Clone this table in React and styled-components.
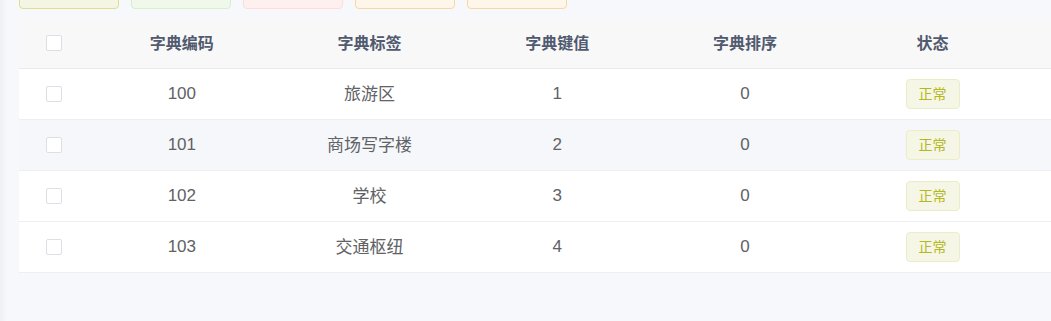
import React from 'react';
import styled, { createGlobalStyle } from 'styled-components';

const rows = [
  { code: 100, label: '旅游区', value: 1, sort: 0 },
  { code: 101, label: '商场写字楼', value: 2, sort: 0, hovered: true },
  { code: 102, label: '学校', value: 3, sort: 0 },
  { code: 103, label: '交通枢纽', value: 4, sort: 0 },
];

// toolbar buttons sit mostly above the visible area, only their bottom edge shows
const buttons = [
  { label: '新增', tone: 'primary' },
  { label: '修改', tone: 'success' },
  { label: '删除', tone: 'danger' },
  { label: '导出', tone: 'warning' },
  { label: '关闭', tone: 'warning' },
];

const tones = {
  primary: { bg: '#f4f5e3', border: '#dcdf8e' },
  success: { bg: '#eff8eb', border: '#d4efc9' },
  danger: { bg: '#fff0f0', border: '#fddcdc' },
  warning: { bg: '#fff6ea', border: '#f8d8a2' },
};

const App = () => (
  <>
    <GlobalStyle />
    <Page>
      <Toolbar>
        {buttons.map((b, i) => (
          <ToolButton key={i} $tone={b.tone} aria-label={b.label} />
        ))}
      </Toolbar>
      <Table>
        <HeadRow>
          <Cell>
            <Checkbox />
          </Cell>
          <HeadCell>字典编码</HeadCell>
          <HeadCell>字典标签</HeadCell>
          <HeadCell>字典键值</HeadCell>
          <HeadCell>字典排序</HeadCell>
          <HeadCell>状态</HeadCell>
          <HeadCell />
        </HeadRow>
        {rows.map((r) => (
          <Row key={r.code} $hovered={r.hovered}>
            <Cell>
              <Checkbox />
            </Cell>
            <Cell>{r.code}</Cell>
            <Cell $cjk>{r.label}</Cell>
            <Cell>{r.value}</Cell>
            <Cell>{r.sort}</Cell>
            <Cell>
              <Tag>正常</Tag>
            </Cell>
            <Cell />
          </Row>
        ))}
      </Table>
    </Page>
  </>
);

const GlobalStyle = createGlobalStyle`
  html, body {
    margin: 0;
    padding: 0;
  }
  body {
    background: linear-gradient(to right, #eff0f4 0, #f7f8fc 7px) #f7f8fc;
    font-family: "Liberation Sans", "Noto Sans CJK SC", sans-serif;
    overflow: hidden;
  }
`;

const Page = styled.div`
  padding: 0 0 48px 19px;
  height: 321px;
  box-sizing: border-box;
`;

const Toolbar = styled.div`
  display: flex;
  gap: 12px;
  margin-top: -20px;
  margin-bottom: 9px;
`;

const ToolButton = styled.button`
  width: 100px;
  height: 29px;
  box-sizing: border-box;
  border-radius: 4px;
  border: 1px solid ${(p) => tones[p.$tone].border};
  background: ${(p) => tones[p.$tone].bg};
  padding: 0;
`;

const Table = styled.div`
  display: flex;
  flex-direction: column;
`;

const HeadRow = styled.div`
  display: grid;
  grid-template-columns: 69px repeat(5, 187.7px) 1fr;
  height: 51px;
  box-sizing: border-box;
  background: #f8f8f9;
  border-bottom: 1px solid #e8eaf0;
`;

const Row = styled(HeadRow)`
  background: ${(p) => (p.$hovered ? '#f5f7fa' : '#ffffff')};
  border-bottom: 1px solid #ebeef3;
`;

const Cell = styled.div`
  display: flex;
  align-items: center;
  justify-content: center;
  font-size: 17px;
  color: #606266;
  font-family: ${(p) =>
    p.$cjk ? '"Noto Sans CJK SC", sans-serif' : 'inherit'};
  padding-bottom: ${(p) => (p.$cjk ? '4px' : '0')};
`;

const HeadCell = styled(Cell)`
  font-size: 16px;
  font-weight: bold;
  color: #515a6e;
  font-family: "Noto Sans CJK SC", sans-serif;
  padding-bottom: 2px;
`;

const Checkbox = styled.span`
  width: 16px;
  height: 16px;
  box-sizing: border-box;
  border: 1px solid #dcdfe6;
  border-radius: 2px;
  background: #ffffff;
`;

const Tag = styled.span`
  display: inline-flex;
  align-items: center;
  justify-content: center;
  width: 54px;
  height: 30px;
  padding-bottom: 2px;
  box-sizing: border-box;
  border: 1px solid #ebedc8;
  border-radius: 4px;
  background: #f5f6e6;
  color: #b5b81c;
  font-size: 14px;
  font-family: "Noto Sans CJK SC", sans-serif;
`;

export default App;
